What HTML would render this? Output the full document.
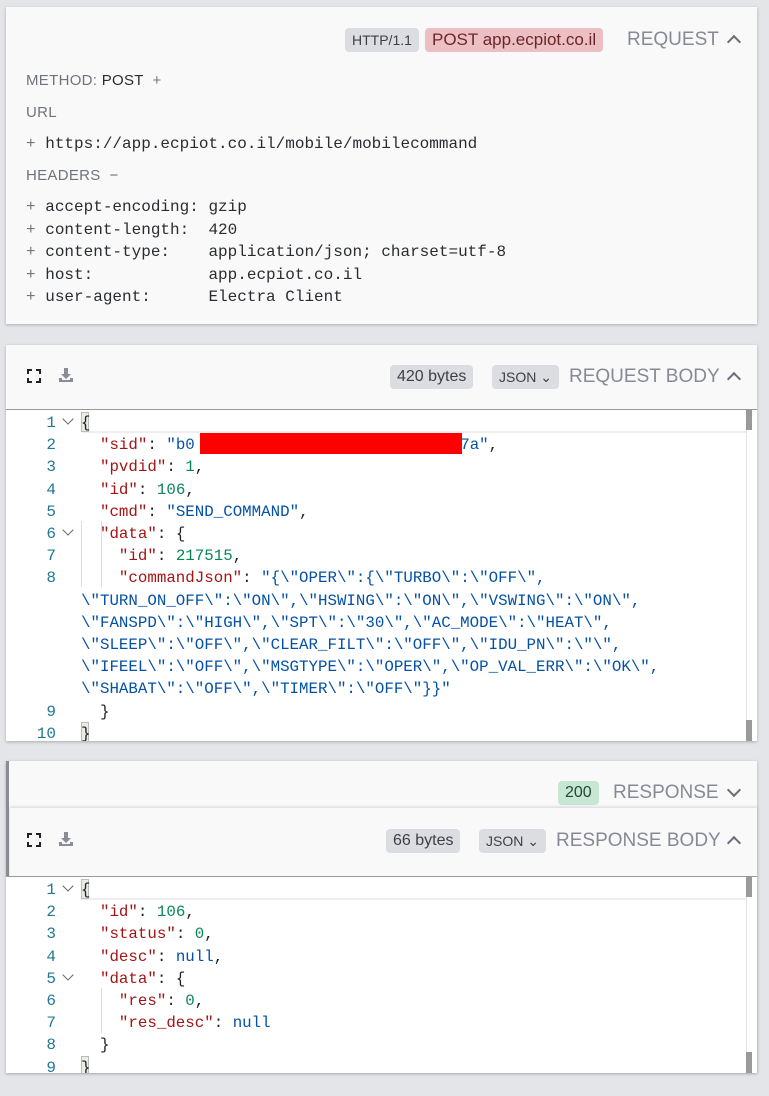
<!DOCTYPE html>
<html><head><meta charset="utf-8"><style>
*{margin:0;padding:0;box-sizing:border-box}
body{width:769px;height:1096px;background:#e3e5e9;position:relative;overflow:hidden;font-family:"Liberation Sans",sans-serif}
.card{position:absolute;background:#f9f9fa;box-shadow:0 1px 3px rgba(0,0,0,.25)}
.abs{position:absolute;white-space:pre}
.badge{position:absolute;height:24px;line-height:24px;border-radius:4px;font-size:15px;padding:0 7px;color:#3c3f46}
.title{position:absolute;font-size:19px;color:#878a96;line-height:24px}
.chev{position:absolute;width:10px;height:10px;border-left:2px solid #6b6e78;border-top:2px solid #6b6e78}
.mono{font-family:"Liberation Mono",monospace;font-size:16px;color:#2a2c31}
.lbl{font-size:15px;color:#70737c;letter-spacing:.3px}
.ed{position:absolute;background:#fff;border-top:1px solid #999;overflow:hidden}
.ln{position:absolute;left:0;width:50px;text-align:right;font-family:"Liberation Mono",monospace;font-size:16px;color:#237893;white-space:pre}
.code{position:absolute;left:75px;font-family:"Liberation Mono",monospace;font-size:15.8px;white-space:pre;color:#222}
.k{color:#a31515}.s{color:#0451a5}.n{color:#098658}
.fold{position:absolute;left:58px;width:8px;height:8px;border-right:1px solid #666;border-bottom:1px solid #666;transform:rotate(45deg)}
</style></head><body>

<div class="card" style="left:6px;top:7px;width:751px;height:317px">
  <div class="badge" style="left:339px;top:21px;background:#dcdde1;font-size:14px">HTTP/1.1</div>
  <div class="badge" style="left:419px;top:21px;background:#ecc0c2;color:#6b262b;font-size:17px">POST app.ecpiot.co.il</div>
  <div class="title" style="left:621px;top:21px">REQUEST</div>
  <div class="chev" style="left:723px;top:30px;transform:rotate(45deg)"></div>
  <div class="abs lbl" style="left:20px;top:65px">METHOD: <span style="color:#2a2c31">POST</span>  +</div>
  <div class="abs lbl" style="left:20px;top:97px">URL</div>
  <div class="abs mono" style="left:20px;top:128px"><span style="color:#777">+</span> https://app.ecpiot.co.il/mobile/mobilecommand</div>
  <div class="abs lbl" style="left:20px;top:160px">HEADERS  −</div>
  <div class="abs mono" style="left:20px;top:189px;line-height:22.5px"><span style="color:#777">+</span> accept-encoding: gzip
<span style="color:#777">+</span> content-length:  420
<span style="color:#777">+</span> content-type:    application/json; charset=utf-8
<span style="color:#777">+</span> host:            app.ecpiot.co.il
<span style="color:#777">+</span> user-agent:      Electra Client</div>
</div>

<div class="card" style="left:6px;top:345px;width:751px;height:396px">
  <svg class="abs" style="left:21px;top:24px" width="14" height="14" viewBox="0 0 14 14" fill="none" stroke="#222" stroke-width="2"><path d="M1 5V1h4M9 1h4v4M13 9v4H9M5 13H1V9"/></svg>
  <svg class="abs" style="left:52px;top:22px" width="16" height="16" viewBox="0 0 16 16" fill="#8a8d96"><path d="M6 1h4v6h3l-5 5-5-5h3z"/><path d="M1 11h3v2h8v-2h3v4H1z"/></svg>
  <div class="badge" style="left:384px;top:20px;background:#dcdde1;font-size:16px">420 bytes</div>
  <div class="badge" style="left:486px;top:20px;background:#dcdde1;font-size:14px">JSON ⌄</div>
  <div class="title" style="left:563px;top:20px">REQUEST BODY</div>
  <div class="chev" style="left:723px;top:29px;transform:rotate(45deg)"></div>
  <div class="ed" style="left:0;top:64px;width:751px;height:332px">
    <div class="abs" style="left:75px;top:1px;width:666px;height:22px;border-bottom:2px solid #eee"></div>
    <div class="abs" style="left:740px;top:0;width:7px;height:332px;border-left:1px solid #e4e4e4"></div>
    <div class="abs" style="left:740px;top:0;width:6px;height:20px;background:#999"></div>
    <div class="abs" style="left:740px;top:310px;width:6px;height:22px;background:#999"></div>
    <div class="abs" style="left:95px;top:111px;height:66px;border-left:1px solid #ddd"></div>
    <div class="abs" style="left:75px;top:111px;height:66px;border-left:1px solid #ddd"></div>
    <div class="abs" style="left:75px;top:2px;width:8px;height:20px;background:#e8eee4;border:1px solid #bbb"></div>
    <div class="abs" style="left:75px;top:312px;width:8px;height:20px;background:#e8eee4;border:1px solid #bbb"></div>
    <div class="fold" style="top:5px"></div><div class="fold" style="top:116px"></div>
    <div class="ln" style="top:2px;line-height:22.2px">1
2
3
4
5
6
7
8





9
10</div>
    <div class="code" style="top:2px;line-height:22.2px">{
  <span class="k">"sid"</span>: <span class="s">"b0                            7a"</span>,
  <span class="k">"pvdid"</span>: <span class="n">1</span>,
  <span class="k">"id"</span>: <span class="n">106</span>,
  <span class="k">"cmd"</span>: <span class="s">"SEND_COMMAND"</span>,
  <span class="k">"data"</span>: {
    <span class="k">"id"</span>: <span class="n">217515</span>,
    <span class="k">"commandJson"</span>: <span class="s">"{\"OPER\":{\"TURBO\":\"OFF\",
\"TURN_ON_OFF\":\"ON\",\"HSWING\":\"ON\",\"VSWING\":\"ON\",
\"FANSPD\":\"HIGH\",\"SPT\":\"30\",\"AC_MODE\":\"HEAT\",
\"SLEEP\":\"OFF\",\"CLEAR_FILT\":\"OFF\",\"IDU_PN\":\"\",
\"IFEEL\":\"OFF\",\"MSGTYPE\":\"OPER\",\"OP_VAL_ERR\":\"OK\",
\"SHABAT\":\"OFF\",\"TIMER\":\"OFF\"}}"</span>
  }
}</div>
    <div class="abs" style="left:194px;top:23px;width:262px;height:21px;background:#f00"></div>
  </div>
</div>

<div class="card" style="left:6px;top:761px;width:751px;height:312px;border-left:3px solid #8b8d94">
  <div class="badge" style="left:549px;top:20px;background:#c8e6d4;color:#1f4a33;font-size:16px">200</div>
  <div class="title" style="left:604px;top:20px">RESPONSE</div>
  <div class="chev" style="left:720px;top:24px;transform:rotate(225deg)"></div>
</div>
<div class="card" style="left:10px;top:808px;width:747px;height:265px;box-shadow:0 -1px 3px rgba(0,0,0,.15)">
  <svg class="abs" style="left:17px;top:25px" width="14" height="14" viewBox="0 0 14 14" fill="none" stroke="#222" stroke-width="2"><path d="M1 5V1h4M9 1h4v4M13 9v4H9M5 13H1V9"/></svg>
  <svg class="abs" style="left:48px;top:23px" width="16" height="16" viewBox="0 0 16 16" fill="#8a8d96"><path d="M6 1h4v6h3l-5 5-5-5h3z"/><path d="M1 11h3v2h8v-2h3v4H1z"/></svg>
  <div class="badge" style="left:376px;top:21px;background:#dcdde1;font-size:16px">66 bytes</div>
  <div class="badge" style="left:469px;top:21px;background:#dcdde1;font-size:14px">JSON ⌄</div>
  <div class="title" style="left:546px;top:21px">RESPONSE BODY</div>
  <div class="chev" style="left:719px;top:30px;transform:rotate(45deg)"></div>
  <div class="ed" style="left:-4px;top:68px;width:751px;height:197px">
    <div class="abs" style="left:75px;top:1px;width:666px;height:22px;border-bottom:2px solid #eee"></div>
    <div class="abs" style="left:740px;top:0;width:7px;height:197px;border-left:1px solid #e4e4e4"></div>
    <div class="abs" style="left:740px;top:0;width:6px;height:20px;background:#999"></div>
    <div class="abs" style="left:740px;top:175px;width:6px;height:22px;background:#999"></div>
    <div class="abs" style="left:95px;top:111px;height:45px;border-left:1px solid #ddd"></div>
    <div class="abs" style="left:75px;top:2px;width:8px;height:20px;background:#e8eee4;border:1px solid #bbb"></div>
    <div class="abs" style="left:75px;top:179px;width:8px;height:18px;background:#e8eee4;border:1px solid #bbb"></div>
    <div class="fold" style="top:5px"></div><div class="fold" style="top:94px"></div>
    <div class="ln" style="top:2px;line-height:22.2px">1
2
3
4
5
6
7
8
9</div>
    <div class="code" style="top:2px;line-height:22.2px">{
  <span class="k">"id"</span>: <span class="n">106</span>,
  <span class="k">"status"</span>: <span class="n">0</span>,
  <span class="k">"desc"</span>: <span class="s">null</span>,
  <span class="k">"data"</span>: {
    <span class="k">"res"</span>: <span class="n">0</span>,
    <span class="k">"res_desc"</span>: <span class="s">null</span>
  }
}</div>
  </div>
</div>
</body></html>
